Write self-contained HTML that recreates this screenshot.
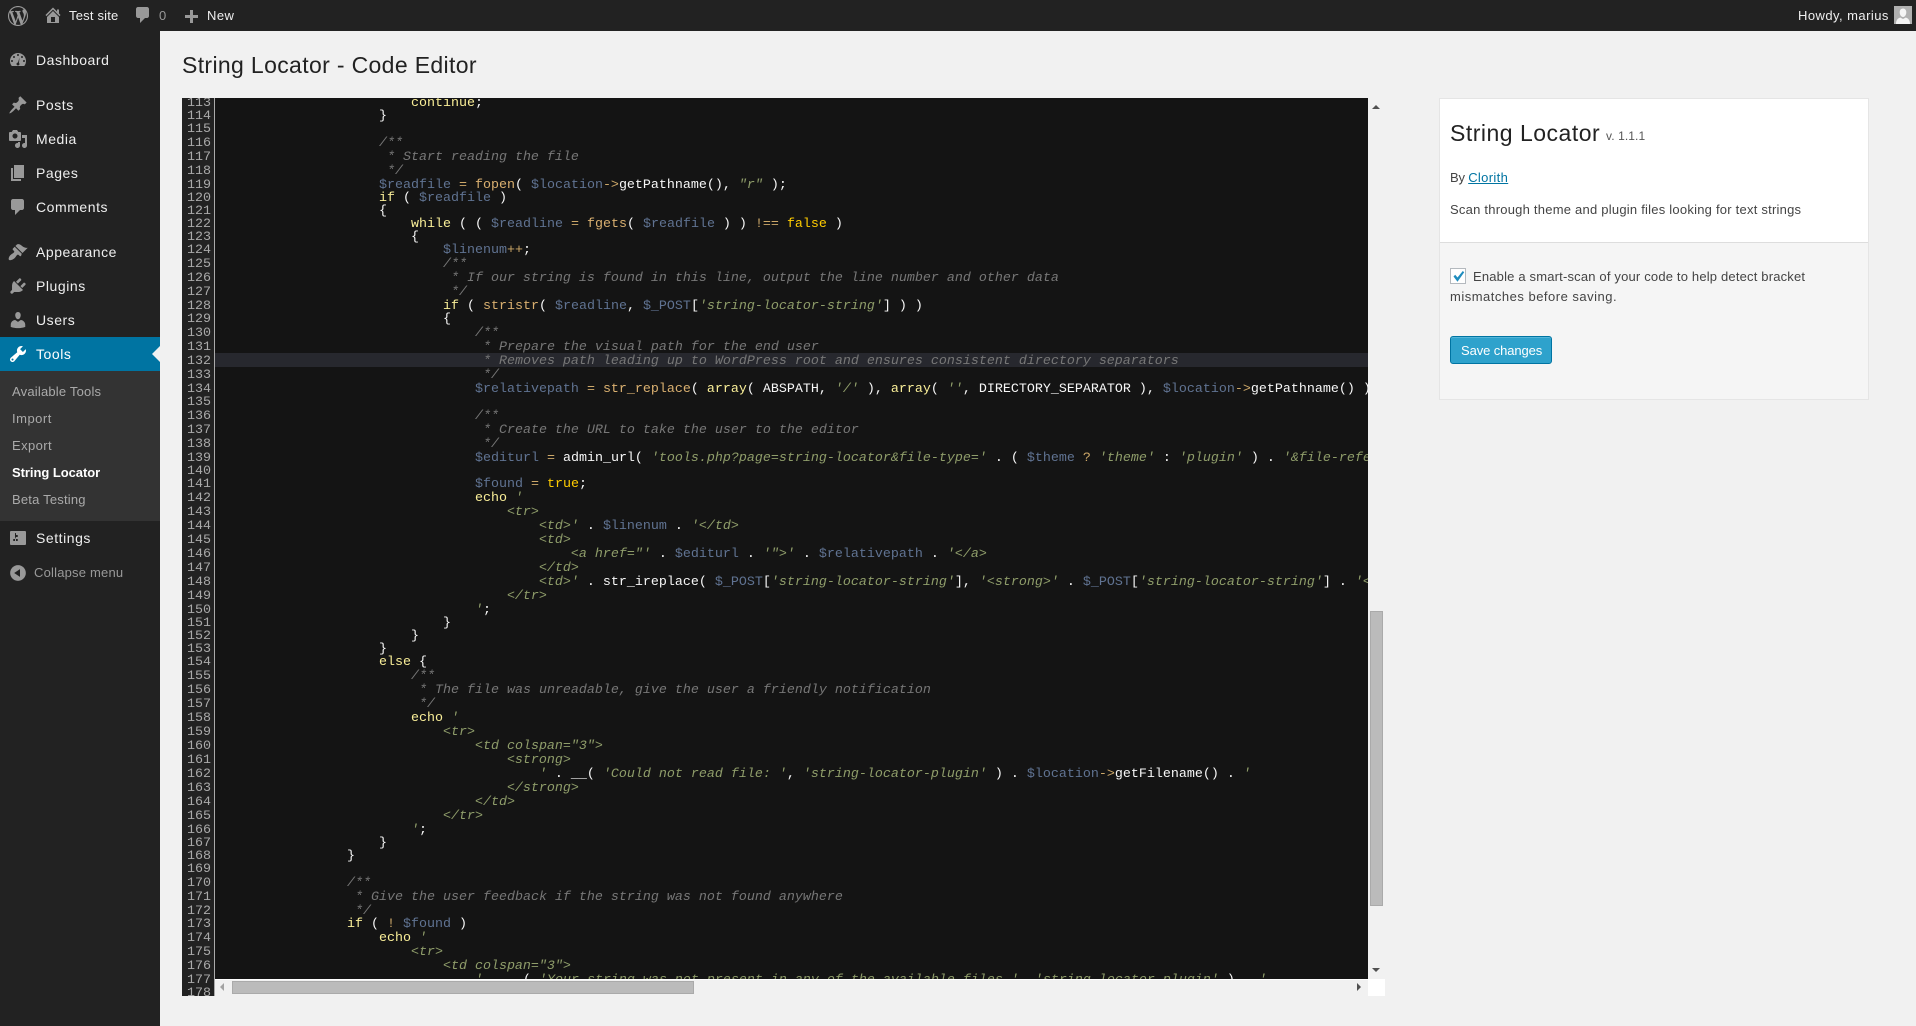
<!DOCTYPE html>
<html lang="en"><head><meta charset="utf-8"><title>String Locator - Code Editor</title>
<style>
html,body{margin:0;padding:0;width:1916px;height:1026px;overflow:hidden;background:#f1f1f1;font-family:"Liberation Sans",sans-serif;color:#444}
*{box-sizing:border-box}
.t{position:absolute;white-space:nowrap;line-height:20px;height:20px}
svg{position:absolute;display:block}
#bar{position:absolute;left:0;top:0;width:1916px;height:31px;background:#222}
#side{position:absolute;left:0;top:31px;width:160px;height:995px;background:#222}
.m{font-size:14px;color:#eee;left:36px;letter-spacing:.55px}
.sub{font-size:13px;color:#aaa;left:12px;letter-spacing:.2px}
.bt{font-size:13px;color:#eee;letter-spacing:.45px}
#ed{position:absolute;left:215px;top:98px;width:1153px;height:881px;background:#141414;overflow:hidden}
#gut{position:absolute;left:182px;top:98px;width:33px;height:898px;background:#222;border-right:1px solid #aaa;overflow:hidden}
pre{position:absolute;margin:0;font:13.33px/13px "Liberation Mono",monospace;white-space:pre}
#gut pre{left:0;top:-1px;width:29px;text-align:right;color:#aaa}
#gut i{font-style:normal}
#gut i::before,.c::before,.s::before{content:"";display:inline-block;width:0;height:10px}
#ed pre{left:4px;top:-1px;color:#f7f7f7}
#al{position:absolute;left:0;top:255px;width:1153px;height:14px;background:#27282e}
.k{color:#f9ee98}.c{color:#777;font-style:italic}.v{color:#607392}.o{color:#cda869}.s{color:#8f9d6a;font-style:italic}.b{color:#dab070}.a{color:#fc0}
#card{position:absolute;left:1439px;top:98px;width:430px;height:302px;background:#fff;border:1px solid #e5e5e5}
#foot{position:absolute;left:0;top:143px;width:428px;height:157px;background:#f5f5f5;border-top:1px solid #ddd}
</style></head><body>
<div id="bar">
<svg style="left:8px;top:6px" width="20" height="20" viewBox="0 0 20 20" fill="#999"><path d="M20 10c0-5.51-4.49-10-10-10C4.48 0 0 4.49 0 10c0 5.52 4.48 10 10 10 5.51 0 10-4.48 10-10zM7.78 15.37L4.37 6.22c.55-.02 1.17-.08 1.17-.08.5-.06.44-1.13-.06-1.11 0 0-1.45.11-2.37.11-.18 0-.37 0-.58-.01C4.12 2.69 6.87 1.11 10 1.11c2.33 0 4.45.87 6.05 2.34-.68-.11-1.65.39-1.65 1.58 0 .74.45 1.36.9 2.1.35.61.55 1.36.55 2.46 0 1.49-1.4 5-1.4 5l-3.03-8.37c.54-.02.82-.17.82-.17.5-.05.44-1.25-.06-1.22 0 0-1.44.12-2.38.12-.87 0-2.33-.12-2.33-.12-.5-.03-.56 1.2-.06 1.22l.92.08 1.26 3.41zM17.41 10c.24-.64.74-1.87.43-4.25.7 1.29 1.05 2.71 1.05 4.25 0 3.29-1.73 6.24-4.4 7.78.97-2.59 1.94-5.2 2.92-7.78zM6.1 18.09C3.12 16.65 1.11 13.53 1.11 10c0-1.3.23-2.48.72-3.59C3.25 10.3 4.67 14.2 6.1 18.09zm4.03-6.63l2.58 6.98c-.86.29-1.76.45-2.71.45-.79 0-1.57-.11-2.29-.33.81-2.38 1.62-4.74 2.42-7.1z" fill-rule="evenodd"/></svg>
<svg style="left:43px;top:5px" width="20" height="20" viewBox="0 0 20 20" fill="#999"><path d="M16 8.5l1.53 1.53-1.06 1.06L10 4.62l-6.47 6.47-1.06-1.06L10 2.5l4 4v-2h2v4zm-6-2.46l6 5.99V18H4v-5.97zM12 17v-5H8v5h4z" fill-rule="evenodd"/></svg>
<div class="t bt" style="left:69px;top:6px;letter-spacing:.2px">Test site</div>
<svg style="left:133px;top:5px" width="20" height="20" viewBox="0 0 20 20" fill="#999"><path d="M5 2h9c1.1 0 2 .9 2 2v7c0 1.1-.9 2-2 2h-2l-5 5v-5H5c-1.1 0-2-.9-2-2V4c0-1.1.9-2 2-2z"/></svg>
<div class="t bt" style="left:159px;top:6px;color:#999">0</div>
<svg style="left:185px;top:10px" width="13" height="13" viewBox="0 0 13 13" fill="#999"><path d="M5 0h3v5h5v3H8v5H5V8H0V5h5z"/></svg>
<div class="t bt" style="left:207px;top:6px">New</div>
<div class="t bt" style="left:1798px;top:6px">Howdy, marius</div>
<svg style="left:1894px;top:6px" width="18" height="18" viewBox="0 0 18 18"><rect width="18" height="18" fill="#b0b0b0"/><path d="M9 2.500c2.200 0 3.300 1.800 3.300 3.900S11 11 9 11 5.700 8.500 5.700 6.400 6.800 2.500 9 2.500zM2 18c0-4 2-5.800 4.200-6.500L9 13l2.800-1.500C14 12.200 16 14 16 18z" fill="#f4f4f4"/></svg>
</div>
<div id="side">
<div style="position:absolute;left:0;top:306px;width:160px;height:34px;background:#0074a2"></div>
<div style="position:absolute;left:0;top:340px;width:160px;height:150px;background:#333"></div>
<div style="position:absolute;left:152px;top:315px;width:0;height:0;border:8px solid transparent;border-left:0;border-right-color:#f1f1f1"></div>
</div>
<svg style="left:8px;top:50px" width="20" height="20" viewBox="0 0 20 20" fill="#999"><path fill-rule="evenodd" d="M3.760 16h12.480c1.100-1.370 1.760-3.110 1.760-5 0-4.420-3.580-8-8-8s-8 3.580-8 8c0 1.890.660 3.630 1.760 5zM10 4c.55 0 1 .45 1 1s-.45 1-1 1-1-.45-1-1 .45-1 1-1zM6 6c.55 0 1 .45 1 1s-.45 1-1 1-1-.45-1-1 .45-1 1-1zm8 0c.55 0 1 .45 1 1s-.45 1-1 1-1-.45-1-1 .45-1 1-1zm-2.500 1.500l-.5 5.500c.3.3.5.600.5 1 0 .800-.700 1.500-1.500 1.500s-1.500-.700-1.500-1.500.700-1.500 1.500-1.500zM4 10c.55 0 1 .45 1 1s-.45 1-1 1-1-.45-1-1 .45-1 1-1zm12 0c.55 0 1 .45 1 1s-.45 1-1 1-1-.45-1-1 .45-1 1-1z"/></svg>
<div class="t m" style="top:50px">Dashboard</div>
<svg style="left:8px;top:95px" width="20" height="20" viewBox="0 0 20 20" fill="#999"><path d="M10.440 3.020l1.820-1.820 6.360 6.350-1.830 1.820c-1.050-.68-2.480-.57-3.410.36l-.75.75c-.92.93-1.040 2.350-.35 3.410l-1.830 1.820-2.410-2.410-2.800 2.790c-.42.42-3.380 2.710-3.800 2.290s1.860-3.390 2.280-3.810l2.790-2.790L4.100 9.360l1.830-1.820c1.050.69 2.480.57 3.400-.36l.75-.75c.93-.92 1.050-2.350.36-3.410z"/></svg>
<div class="t m" style="top:95px">Posts</div>
<svg style="left:8px;top:129px" width="20" height="20" viewBox="0 0 20 20" fill="#999"><path fill-rule="evenodd" d="M13 11V4c0-.55-.45-1-1-1h-1.670L9 1H5L3.670 3H2c-.55 0-1 .45-1 1v7c0 .55.45 1 1 1h10c.55 0 1-.45 1-1zM7 4.500c1.380 0 2.500 1.120 2.500 2.500S8.380 9.500 7 9.500 4.500 8.380 4.500 7 5.620 4.500 7 4.500zM14 6h5v10.500c0 1.380-1.120 2.500-2.500 2.500S14 17.880 14 16.500s1.120-2.500 2.500-2.500c.17 0 .34.02.5.05V9h-3V6zm-4 8.050V13h2v3.500c0 1.380-1.120 2.500-2.500 2.500S7 17.880 7 16.500 8.120 14 9.500 14c.17 0 .34.02.5.05z"/></svg>
<div class="t m" style="top:129px">Media</div>
<svg style="left:8px;top:163px" width="20" height="20" viewBox="0 0 20 20" fill="#999"><path d="M6 15V2h10v13H6zm-1 1h8v2H3V5h2v11z"/></svg>
<div class="t m" style="top:163px">Pages</div>
<svg style="left:8px;top:197px" width="20" height="20" viewBox="0 0 20 20" fill="#999"><path d="M5 2h9c1.100 0 2 .9 2 2v7c0 1.100-.9 2-2 2h-2l-5 5v-5H5c-1.100 0-2-.9-2-2V4c0-1.100.9-2 2-2z"/></svg>
<div class="t m" style="top:197px">Comments</div>
<svg style="left:8px;top:242px" width="20" height="20" viewBox="0 0 20 20" fill="#999"><path d="M14.480 11.060L7.410 3.990l1.500-1.500c.5-.56 2.300-.47 3.510.32 1.210.8 1.430 1.280 2.910 2.100 1.180.64 2.450 1.260 4.450.85zm-.71.71L6.700 4.700 4.930 6.470c-.39.39-.39 1.020 0 1.410l1.060 1.060c.39.39.39 1.030 0 1.420-.6.6-1.430 1.110-2.210 1.690-.35.26-.7.53-1.010.84C1.430 13.710 0 16.830 1.010 17.850c1.010 1.010 4.200-.38 5.640-1.760.31-.31.58-.66.84-1.010.58-.78 1.100-1.610 1.700-2.210.39-.39 1.020-.39 1.410 0l1.060 1.060c.39.39 1.020.39 1.410 0z"/></svg>
<div class="t m" style="top:242px">Appearance</div>
<svg style="left:8px;top:276px" width="20" height="20" viewBox="0 0 20 20" fill="#999"><path d="M13.110 4.360L9.870 7.600 8 5.730l3.240-3.240c.35-.34 1.050-.2 1.560.32.52.51.66 1.210.31 1.550zm-8 1.770l.91-1.120 9.010 9.010-1.190.84c-.71.71-2.630 1.160-3.820 1.160H6.140L4.900 17.260c-.59.59-1.540.59-2.120 0-.59-.58-.59-1.530 0-2.120l1.240-1.240v-3.880c0-1.130.4-3.190 1.090-3.890zm7.260 3.970l3.240-3.240c.34-.35 1.040-.21 1.550.31.52.51.66 1.210.31 1.550l-3.240 3.250z"/></svg>
<div class="t m" style="top:276px">Plugins</div>
<svg style="left:8px;top:310px" width="20" height="20" viewBox="0 0 20 20" fill="#999"><path d="M10 9.250c-2.270 0-2.730-3.440-2.730-3.440C7 4.020 7.820 2 9.970 2c2.160 0 2.980 2.020 2.710 3.810 0 0-.41 3.440-2.680 3.440zm0 2.570L12.720 10c2.390 0 4.520 2.330 4.520 4.530v2.490s-3.650 1.130-7.240 1.130c-3.650 0-7.240-1.130-7.240-1.130v-2.490c0-2.250 1.940-4.480 4.470-4.480z"/></svg>
<div class="t m" style="top:310px">Users</div>
<svg style="left:8px;top:344px" width="20" height="20" viewBox="0 0 20 20" fill="#fff"><path fill-rule="evenodd" d="M16.680 9.770c-1.340 1.340-3.300 1.670-4.950.99l-5.410 6.520c-.99.99-2.590.99-3.580 0s-.99-2.590 0-3.570l6.520-5.420c-.68-1.650-.35-3.610.99-4.950 1.280-1.280 3.120-1.620 4.720-1.060l-2.890 2.890 2.820 2.820 2.860-2.870c.53 1.580.18 3.390-1.080 4.650zM3.810 16.210c.4.39 1.040.39 1.430 0 .4-.4.4-1.040 0-1.430-.39-.4-1.030-.4-1.430 0-.39.39-.39 1.030 0 1.430z"/></svg>
<div class="t m" style="top:344px;color:#fff">Tools</div>
<div class="t sub" style="top:382px">Available Tools</div>
<div class="t sub" style="top:409px;letter-spacing:.5px">Import</div>
<div class="t sub" style="top:436px;letter-spacing:.4px">Export</div>
<div class="t sub" style="top:463px;color:#fff;font-weight:bold;letter-spacing:-.05px">String Locator</div>
<div class="t sub" style="top:490px">Beta Testing</div>
<svg style="left:8px;top:528px" width="20" height="20" viewBox="0 0 20 20" fill="#999"><path fill-rule="evenodd" d="M18 16V4c0-.55-.45-1-1-1H3c-.55 0-1 .45-1 1v12c0 .55.45 1 1 1h14c.55 0 1-.45 1-1zM8 11h1c.55 0 1 .45 1 1s-.45 1-1 1H8v1.500c0 .28-.22.5-.5.5s-.5-.22-.5-.5V13H6c-.55 0-1-.45-1-1s.45-1 1-1h1V5.500c0-.28.22-.5.5-.5s.5.22.5.5V7h1c.55 0 1 .45 1 1s-.45 1-1 1h-1v5.500c0 .28-.22.5-.5.5s-.5-.22-.5-.5V9z"/></svg>
<div class="t m" style="top:528px">Settings</div>
<svg style="left:8px;top:563px" width="20" height="20" viewBox="0 0 20 20" fill="#999"><path fill-rule="evenodd" d="M10 2.160c4.330 0 7.840 3.510 7.840 7.840s-3.510 7.840-7.840 7.840S2.160 14.330 2.160 10 5.710 2.160 10 2.160zm2 11.720V6.120L6.180 9.970z"/></svg>
<div class="t sub" style="left:34px;top:563px;color:#999">Collapse menu</div>

<div class="t" style="left:182px;top:53px;height:24px;line-height:24px;font-size:23px;color:#222;letter-spacing:.35px">String Locator - Code Editor</div>

<div id="gut"><pre>113
114
115
<i>116</i>
<i>117</i>
<i>118</i>
<i>119</i>
120
121
122
123
124
<i>125</i>
<i>126</i>
<i>127</i>
<i>128</i>
129
<i>130</i>
<i>131</i>
<i>132</i>
<i>133</i>
<i>134</i>
135
<i>136</i>
<i>137</i>
<i>138</i>
<i>139</i>
140
141
<i>142</i>
<i>143</i>
<i>144</i>
<i>145</i>
<i>146</i>
<i>147</i>
<i>148</i>
<i>149</i>
<i>150</i>
151
152
153
154
<i>155</i>
<i>156</i>
<i>157</i>
<i>158</i>
<i>159</i>
<i>160</i>
<i>161</i>
<i>162</i>
<i>163</i>
<i>164</i>
<i>165</i>
<i>166</i>
167
168
169
<i>170</i>
<i>171</i>
<i>172</i>
173
<i>174</i>
<i>175</i>
<i>176</i>
<i>177</i>
178</pre></div>
<div id="ed"><div id="al"></div><pre>                        <span class="k">continue</span>;
                    }

                    <span class="c">/**</span>
                     <span class="c">* Start reading the file</span>
                     <span class="c">*/</span>
                    <span class="v">$readfile</span> <span class="o">=</span> <span class="b">fopen</span>( <span class="v">$location</span><span class="o">-&gt;</span>getPathname(), <span class="s">"r"</span> );
                    <span class="k">if</span> ( <span class="v">$readfile</span> )
                    {
                        <span class="k">while</span> ( ( <span class="v">$readline</span> <span class="o">=</span> <span class="b">fgets</span>( <span class="v">$readfile</span> ) ) <span class="o">!==</span> <span class="a">false</span> )
                        {
                            <span class="v">$linenum</span><span class="o">++</span>;
                            <span class="c">/**</span>
                             <span class="c">* If our string is found in this line, output the line number and other data</span>
                             <span class="c">*/</span>
                            <span class="k">if</span> ( <span class="b">stristr</span>( <span class="v">$readline</span>, <span class="v">$_POST</span>[<span class="s">'string-locator-string'</span>] ) )
                            {
                                <span class="c">/**</span>
                                 <span class="c">* Prepare the visual path for the end user</span>
                                 <span class="c">* Removes path leading up to WordPress root and ensures consistent directory separators</span>
                                 <span class="c">*/</span>
                                <span class="v">$relativepath</span> <span class="o">=</span> <span class="b">str_replace</span>( <span class="k">array</span>( ABSPATH, <span class="s">'/'</span> ), <span class="k">array</span>( <span class="s">''</span>, DIRECTORY_SEPARATOR ), <span class="v">$location</span><span class="o">-&gt;</span>getPathname() );

                                <span class="c">/**</span>
                                 <span class="c">* Create the URL to take the user to the editor</span>
                                 <span class="c">*/</span>
                                <span class="v">$editurl</span> <span class="o">=</span> admin_url( <span class="s">'tools.php?page=string-locator&amp;file-type='</span> . ( <span class="v">$theme</span> <span class="o">?</span> <span class="s">'theme'</span> : <span class="s">'plugin'</span> ) . <span class="s">'&amp;file-reference='</span> );

                                <span class="v">$found</span> <span class="o">=</span> <span class="a">true</span>;
                                <span class="k">echo</span> <span class="s">'</span>
                                    <span class="s">&lt;tr&gt;</span>
                                        <span class="s">&lt;td&gt;'</span> . <span class="v">$linenum</span> . <span class="s">'&lt;/td&gt;</span>
                                        <span class="s">&lt;td&gt;</span>
                                            <span class="s">&lt;a href="'</span> . <span class="v">$editurl</span> . <span class="s">'"&gt;'</span> . <span class="v">$relativepath</span> . <span class="s">'&lt;/a&gt;</span>
                                        <span class="s">&lt;/td&gt;</span>
                                        <span class="s">&lt;td&gt;'</span> . str_ireplace( <span class="v">$_POST</span>[<span class="s">'string-locator-string'</span>], <span class="s">'&lt;strong&gt;'</span> . <span class="v">$_POST</span>[<span class="s">'string-locator-string'</span>] . <span class="s">'&lt;/strong&gt;'</span> );
                                    <span class="s">&lt;/tr&gt;</span>
                                <span class="s">'</span>;
                            }
                        }
                    }
                    <span class="k">else</span> {
                        <span class="c">/**</span>
                         <span class="c">* The file was unreadable, give the user a friendly notification</span>
                         <span class="c">*/</span>
                        <span class="k">echo</span> <span class="s">'</span>
                            <span class="s">&lt;tr&gt;</span>
                                <span class="s">&lt;td colspan="3"&gt;</span>
                                    <span class="s">&lt;strong&gt;</span>
                                        <span class="s">'</span> . __( <span class="s">'Could not read file: '</span>, <span class="s">'string-locator-plugin'</span> ) . <span class="v">$location</span><span class="o">-&gt;</span>getFilename() . <span class="s">'</span>
                                    <span class="s">&lt;/strong&gt;</span>
                                <span class="s">&lt;/td&gt;</span>
                            <span class="s">&lt;/tr&gt;</span>
                        <span class="s">'</span>;
                    }
                }

                <span class="c">/**</span>
                 <span class="c">* Give the user feedback if the string was not found anywhere</span>
                 <span class="c">*/</span>
                <span class="k">if</span> ( <span class="o">!</span> <span class="v">$found</span> )
                    <span class="k">echo</span> <span class="s">'</span>
                        <span class="s">&lt;tr&gt;</span>
                            <span class="s">&lt;td colspan="3"&gt;</span>
                                <span class="s">'</span> . __( <span class="s">'Your string was not present in any of the available files.'</span>, <span class="s">'string-locator-plugin'</span> ) . <span class="s">'</span>
</pre></div>

<div style="position:absolute;left:215px;top:979px;width:1153px;height:1px;background:#fff"></div>
<div style="position:absolute;left:1368px;top:979px;width:17px;height:17px;background:#fff"></div>
<div style="position:absolute;left:232px;top:981px;width:462px;height:13px;background:#bbb;border:1px solid #aaa"></div>
<div style="position:absolute;left:1370px;top:611px;width:13px;height:295px;background:#bbb;border:1px solid #aaa"></div>
<div style="position:absolute;left:1372px;top:105px;width:0;height:0;border:4px solid transparent;border-top:0;border-bottom-color:#505050"></div>
<div style="position:absolute;left:1372px;top:968px;width:0;height:0;border:4px solid transparent;border-bottom:0;border-top-color:#505050"></div>
<div style="position:absolute;left:220px;top:983px;width:0;height:0;border:4px solid transparent;border-left:0;border-right-color:#a3a3a3"></div>
<div style="position:absolute;left:1357px;top:983px;width:0;height:0;border:4px solid transparent;border-right:0;border-left-color:#505050"></div>

<div id="card">
<div id="foot"></div>
</div>
<div class="t" style="left:1450px;top:121px;height:24px;line-height:24px;font-size:23px;color:#222;letter-spacing:.5px">String Locator</div>
<div class="t" style="left:1606px;top:126px;font-size:12px;color:#555;letter-spacing:.1px">v. 1.1.1</div>
<div class="t" style="left:1450px;top:168px;font-size:13px;letter-spacing:.35px"><span style="letter-spacing:-.2px">By </span><span style="color:#0074a2;text-decoration:underline">Clorith</span></div>
<div class="t" style="left:1450px;top:200px;font-size:13px;letter-spacing:.23px">Scan through theme and plugin files looking for text strings</div>
<div style="position:absolute;left:1450px;top:268px;width:16px;height:16px;background:#fff;border:1px solid #b4b9be"></div>
<svg style="left:1452px;top:270px" width="13" height="13" viewBox="0 0 13 13"><path d="M1.500 6.500l1.700-1.700 2.300 2.700L10.800 1l1.400 1.300L5.500 11.800z" fill="#1e8cbe"/></svg>
<div class="t" style="left:1473px;top:267px;font-size:13px;letter-spacing:.18px">Enable a smart-scan of your code to help detect bracket</div>
<div class="t" style="left:1450px;top:287px;font-size:13px;letter-spacing:.5px">mismatches before saving.</div>
<div style="position:absolute;left:1450px;top:336px;width:102px;height:28px;background:#2ea2cc;border:1px solid #0074a2;border-radius:3px;box-shadow:inset 0 1px 0 rgba(120,200,230,.5)"></div>
<div class="t" style="left:1461px;top:341px;font-size:13px;color:#fff;letter-spacing:-.1px">Save changes</div>
</body></html>
